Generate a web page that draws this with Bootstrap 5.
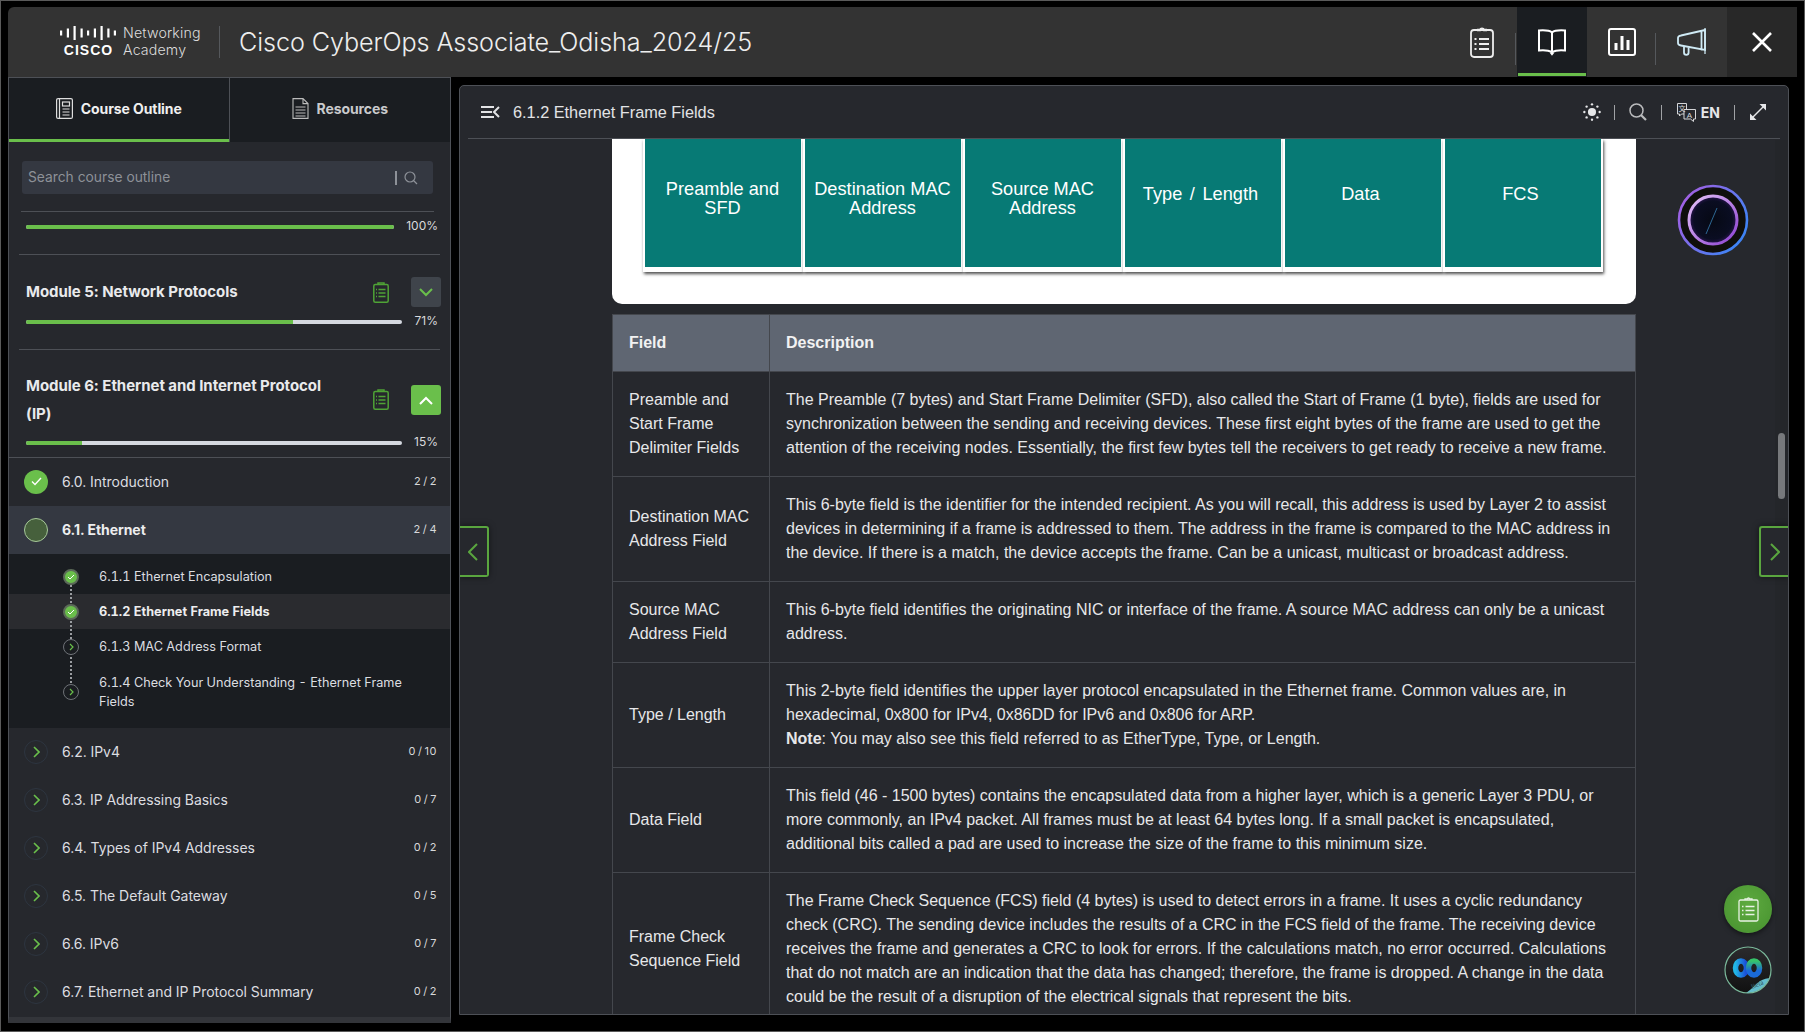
<!DOCTYPE html>
<html lang="en">
<head>
<meta charset="UTF-8">
<title>Cisco CyberOps Associate</title>
<link href="https://cdn.jsdelivr.net/npm/bootstrap@5.3.0/dist/css/bootstrap.min.css" rel="stylesheet">
<style>
html, body { margin: 0; height: 100%; background: #000; overflow: hidden; }
body { font-family: Inter, "Liberation Sans", sans-serif; color: #e6e7e9; }
.shell { width: 1805px; height: 1032px; border: 1px solid #5a5a5a; padding: 6px 7px 0; position: relative; }
/* top bar */
.topbar { height: 70px; background: #333; border-radius: 6px 6px 0 0; }
.logo-area { width: 211px; padding-left: 52px; height: 100%; gap: 7px; padding-bottom: 2px; }
.logo-cisco { width: 56px; color: #fff; }
.logo-cisco svg { display: block; }
.logo-word { font: 700 14px/12px "Liberation Sans", sans-serif; letter-spacing: 1px; text-align: center; margin-top: 4px; padding-left: 1px; }
.logo-na { font-size: 14.2px; line-height: 17px; font-weight: 300; color: #ddd; letter-spacing: .15px; }
.vsep { width: 1px; height: 32px; background: #55585c; }
.course-title { font-size: 25.2px; font-weight: 300; color: #eee; margin-left: 19px; margin-bottom: 0; letter-spacing: -.1px; }
.top-tab { width: 70px; height: 70px; position: relative; }
.top-tab.is-active { background: #1a1d21; }
.top-tab.is-active::after { content: ""; position: absolute; left: 1px; right: 1px; bottom: 1px; height: 3px; background: #6abf4b; }
.top-tab.is-close { background: #282828; }
.top-tab.with-sep::before { content: ""; position: absolute; right: 1px; top: 26px; height: 32px; width: 1px; background: #55585c; }
/* columns */
.work-row { height: 946px; }
.side-pane { width: 443px; height: 946px; background: #26282d; border: 1px solid #4d5056; border-bottom-width: 6px; border-bottom-color: #33353a; position: relative; }
.main-pane { width: 1330px; height: 930px; margin: 8px 0 0 8px; background: #26282d; border: 1px solid #4d5056; border-radius: 5px 5px 0 0; position: relative; overflow: hidden; }
/* sidebar */
.side-tab { width: 50%; height: 64px; background: #1a1d21; color: #c9cacc; font-size: 14px; font-weight: 700; gap: 8px; border: 0; border-radius: 0; letter-spacing: -.1px; padding-bottom: 9px; }
.side-tab.is-active { box-shadow: inset 0 -3px 0 #6abf4b; color: #f0f0f0; border-right: 1px solid #4d5056; }
.search-wrap { padding: 19px 17px 0 13px; }
.search-box { height: 33px; background: #343841; border-radius: 3px; padding: 0 15px 0 6px; }
.search-box input { background: transparent; border: 0; outline: 0; padding: 0; font-size: 13.8px; color: #ccc; box-shadow: none; }
.search-box input::placeholder { color: #8d9198; opacity: 1; }
.cursor-bar { width: 2px; height: 14px; background: #8d9198; margin-right: 7px; }
.side-line { height: 1px; background: #4d5056; }
.line-a { margin: 17px 16px 0 12px; }
.line-b { margin: 0 10px 0 10px; }
.line-c { margin: 0 10px 0 10px; }
.prog-row { gap: 12px; padding-left: 17px; padding-right: 12px; height: 16px; }
.prog-row .progress { flex: 1; height: 4px; background: #d5d8df; border-radius: 3px; }
.prog-row .progress-bar { background: #6abf4b; }
.prog-pct { font-size: 12px; color: #d9dadc; width: 24px; text-align: right; font-weight: 400; white-space: nowrap; margin-top: -3px; }
.top-prog { height: 42px; padding-top: 6px; padding-right: 12px; align-items: flex-start; }
.top-prog .progress { margin-top: 7px; }
.top-prog .prog-pct { margin-top: -1px; width: 32px; }
.mod-head { padding: 0 9px 0 17px; }
.mod-title { font-size: 15px; font-weight: 700; line-height: 28px; color: #e9eaec; flex: 1; letter-spacing: -.05px; margin: 0; }
.mod-six .mod-title { padding-right: 20px; }
.mod-clip { margin: 0 22px 0 16px; flex: none; }
.mod-six .mod-clip { margin-bottom: 2px; }
.mod-btn { width: 30px; height: 30px; border-radius: 3px; background: #3f444b; border: 0; padding: 0; flex: none; }
.mod-btn.is-open { background: #6abf4b; }
.mod-five { height: 94px; padding-top: 22px; }
.mod-six { height: 107px; padding-top: 22px; }
.mod-five .prog-row { margin-top: 7px; }
.mod-six .prog-row { margin-top: 7px; }
.topic-list { border-radius: 0; border-top: 1px solid #4d5056; }
.topic-row { height: 48px; background: transparent; border: 0; border-radius: 0 !important; padding: 0 13px 1px 15px; color: #dcdde0; font-size: 14px; font-weight: 400; gap: 14px; letter-spacing: -.05px; }
.topic-row.is-open { background: #343841; font-weight: 700; color: #ededee; }
.topic-count { margin-left: auto; font-size: 11px; letter-spacing: .5px; word-spacing: -1.500px; color: #d7d8da; }
.dot-big { width: 24px; height: 24px; border-radius: 50%; flex: none; }
.dot-done { background: #6abf4b; }
.dot-part { background: #46603c; border: 1px solid #a6c89a; }
.dot-todo { border: 1px solid #2d3540; }
.sub-list { background: #1a1d21; height: 174px; padding-top: 5px; position: relative; }
.sub-row { padding: 0 30px 0 54px; gap: 20px; font-size: 12.7px; color: #dcdde0; line-height: 19px; position: relative; font-variant-numeric: tabular-nums; }
.sub-row.is-current { background: #2a2b2f; font-weight: 700; color: #ededee; height: 35px; }
.sub-row.h-one { height: 35px; }
.sub-row.h-two { height: 55px; }
.dot-sub { width: 16px; height: 16px; border-radius: 50%; flex: none; position: relative; z-index: 2; background: #1a1d21; }
.dot-sub.ok { background: #6abf4b; border: 2px solid #5b6a58; }
.dot-sub.next { border: 1px solid #6e7277; }
.dot-trail { position: absolute; left: 61px; top: 20px; height: 117px; border-left: 2px dotted #9a9da1; z-index: 1; }
/* main */
.tool-bar { height: 53px; margin: 0 8px; border-bottom: 1px solid #4d5056; padding: 0 13px 0 13px; }
.page-name { font: 400 16.3px "Liberation Sans", sans-serif; color: #e2e3e5; margin: 0 0 0 13px; }
.tool-actions { gap: 14px; }
.tool-sun { margin-right: -1px; }
.tool-sep { width: 1px; height: 15px; background: #a0a2a5; }
.lang-code { font-size: 14px; font-weight: 700; color: #e6e7e9; }
.scroll-view { height: 876px; overflow: hidden; padding-left: 152px; position: relative; }
.scroll-track { position: absolute; right: 0; top: 54px; bottom: 0; width: 13px; background: #24262a; }
.scroll-thumb { position: absolute; right: 3px; top: 347px; width: 7px; height: 66px; background: #77797c; border-radius: 4px; }
.content-col { width: 1024px; }
.figure-card { background: #fff; height: 165px; border-radius: 0 0 10px 10px; padding: 0 33px 0 31px; }
.frame-cell { flex: 0 0 16.666%; height: 133px; background: #077a75; color: #fff; font: 400 18.2px/19px "Liberation Sans", sans-serif; text-align: center; border: solid #fff; border-width: 0 2px 5px 2px; box-shadow: 1px 2px 3px rgba(0,0,0,.7); padding: 0 0 17px 0; }
.frame-cell.two-line { padding-top: 8px; padding-right: 1px; }
.frame-cell.left-nudge { padding-right: 5px; }
.frame-cell.wide-word { word-spacing: 2.500px; }
.fields-table { margin: 10px 0 0; font: 400 16px/24px "Liberation Sans", sans-serif; --bs-table-bg: transparent; --bs-table-color: #e6e7e9; --bs-table-border-color: #44474d; border-color: #44474d; color: #e6e7e9; }
.fields-table th { background: #5f6672; color: #f2f2f2; font-weight: 700; padding: 16px; --bs-table-bg: #5f6672; --bs-table-color: #f2f2f2; }
.fields-table td { padding: 16px; vertical-align: middle; }
.fields-table .col-field { width: 157px; }
.page-arrow { position: absolute; top: 440px; width: 30px; height: 51px; border: 2px solid #5aa63f; background: #26282d; padding: 0; box-shadow: 0 0 6px rgba(0,0,0,.5); }
.arrow-prev { left: -1px; border-left: 0; border-radius: 0 3px 3px 0; }
.arrow-next { right: -1px; border-right: 0; border-radius: 3px 0 0 3px; }
.orb { position: absolute; left: 1217px; top: 98px; width: 72px; height: 72px; }
.fab-clip { position: absolute; left: 1264px; top: 799px; width: 48px; height: 48px; border-radius: 50%; background: radial-gradient(circle at 50% 40%, #5eaa40, #47922f); box-shadow: 0 2px 5px rgba(0,0,0,.5); }
.fab-webex { position: absolute; left: 1264px; top: 860px; width: 48px; height: 48px; }
</style>
</head>
<body>
<div class="shell">

  <header class="topbar d-flex align-items-center">
    <div class="logo-area d-flex align-items-center">
      <div class="logo-cisco">
        <svg width="56" height="14" viewBox="0 0 56 14" fill="#fff"><rect x="0" y="4.500" width="2.200" height="5"/><rect x="6.800" y="2.500" width="2.200" height="9"/><rect x="13.500" y="0" width="2.200" height="14"/><rect x="20.500" y="2.500" width="2.200" height="9"/><rect x="27" y="4.500" width="2.200" height="5"/><rect x="33.800" y="2.500" width="2.200" height="9"/><rect x="40.500" y="0" width="2.200" height="14"/><rect x="47.300" y="2.500" width="2.200" height="9"/><rect x="53.800" y="4.500" width="2.200" height="5"/></svg>
        <div class="logo-word">CISCO</div>
      </div>
      <div class="logo-na">Networking<br>Academy</div>
    </div>
    <div class="vsep"></div>
    <h1 class="course-title">Cisco CyberOps Associate_Odisha_2024/25</h1>
    <div class="ms-auto d-flex">
      <div class="top-tab with-sep d-flex align-items-center justify-content-center">
        <svg width="24" height="32" viewBox="0 0 24 32" fill="none" stroke="#eee" stroke-width="1.800"><rect x="1" y="4" width="22" height="27" rx="3"/><path d="M7 4h3a2.200 2.200 0 0 1 4 0h3" stroke-width="2.400"/><path d="M9 13h10M9 18h10M9 23h10" stroke-width="2"/><path d="M4.500 13h2M4.500 18h2M4.500 23h2" stroke-width="2"/></svg>
      </div>
      <div class="top-tab is-active d-flex align-items-center justify-content-center">
        <svg width="28" height="27" viewBox="0 0 28 27" fill="none" stroke="#fff" stroke-width="2"><path d="M14 3.500C12 1.800 8 1 1 1.500V21.500c6-.5 10 0 13 1.500 3-1.500 7-2 13-1.500V1.500C20 1 16 1.800 14 3.500zM14 3.500V23"/><path d="M12.500 23.500l1.500 2 1.500-2" stroke-width="1.500"/></svg>
      </div>
      <div class="top-tab with-sep d-flex align-items-center justify-content-center">
        <svg width="28" height="28" viewBox="0 0 28 28" fill="none" stroke="#fff" stroke-width="2"><rect x="1" y="1" width="26" height="26" rx="2"/><path d="M8 22v-7M14 22V8M20 22v-10" stroke-width="3"/></svg>
      </div>
      <div class="top-tab d-flex align-items-center justify-content-center">
        <svg width="30" height="30" viewBox="0 0 30 30" fill="none" stroke="#cfeaf5" stroke-width="1.800"><path d="M4 8.500L28 3v20L4 18.500Q1 18 1 16v-5q0-2 3-2.500zM24.500 3.500v20"/><path d="M28 1v26" stroke-width="1.300"/><path d="M7 19.500v6a2.300 2.300 0 0 0 4.600 0v-5"/></svg>
      </div>
      <div class="top-tab is-close d-flex align-items-center justify-content-center">
        <svg width="20" height="20" viewBox="0 0 20 20" stroke="#fff" stroke-width="2.600"><path d="M1 1l18 18M19 1L1 19"/></svg>
      </div>
    </div>
  </header>

  <div class="work-row d-flex">
    <aside class="side-pane">
      <div class="d-flex">
        <button class="side-tab is-active btn d-flex align-items-center justify-content-center">
          <svg width="17" height="21" viewBox="0 0 17 21" fill="none" stroke="#ddd" stroke-width="1.200"><rect x=".6" y=".6" width="15.800" height="19.800" rx="1.500"/><path d="M3.500 1v19"/><rect x="6.500" y="4" width="7" height="4" /><path d="M6.500 11h7M6.500 14h7M6.500 17h7"/></svg>
          Course Outline
        </button>
        <button class="side-tab btn d-flex align-items-center justify-content-center">
          <svg width="17" height="21" viewBox="0 0 17 21" fill="none" stroke="#bbb" stroke-width="1.100"><path d="M1 .6h10l5 5v14.800H1zM11 .6v5h5"/><path d="M3.500 9h10M3.500 12h10M3.500 15h10M3.500 18h10"/></svg>
          Resources
        </button>
      </div>

      <div class="search-wrap">
        <div class="search-box d-flex align-items-center">
          <input type="text" class="form-control" placeholder="Search course outline">
          <span class="cursor-bar flex-shrink-0"></span>
          <svg class="flex-shrink-0" width="14" height="14" viewBox="0 0 14 14" fill="none" stroke="#8d9198" stroke-width="1.200"><circle cx="6" cy="6" r="5"/><path d="M9.500 9.500L13 13"/></svg>
        </div>
      </div>

      <div class="side-line line-a"></div>
      <div class="prog-row top-prog d-flex">
        <div class="progress"><div class="progress-bar" style="width:100%"></div></div>
        <span class="prog-pct">100%</span>
      </div>
      <div class="side-line line-b"></div>

      <section class="mod-five">
        <div class="mod-head d-flex align-items-center">
          <h2 class="mod-title">Module 5: Network Protocols</h2>
          <svg class="mod-clip" width="16" height="21" viewBox="0 0 16 21" fill="none" stroke="#4fa336" stroke-width="1.500"><rect x=".8" y="2.500" width="14.400" height="17.700" rx="1.500"/><path d="M5 2.500V1h6v1.500" /><path d="M5.500 7.500h7M5.500 11h7M5.500 14.500h7M3 7.500h1M3 11h1M3 14.500h1"/></svg>
          <button class="mod-btn d-flex align-items-center justify-content-center"><svg width="14" height="9" viewBox="0 0 14 9" fill="none" stroke="#6abf4b" stroke-width="2"><path d="M1 1l6 6 6-6"/></svg></button>
        </div>
        <div class="prog-row d-flex align-items-center">
          <div class="progress"><div class="progress-bar" style="width:71%"></div></div>
          <span class="prog-pct">71%</span>
        </div>
      </section>
      <div class="side-line line-c"></div>

      <section class="mod-six">
        <div class="mod-head d-flex align-items-center">
          <h2 class="mod-title">Module 6: Ethernet and Internet Protocol (IP)</h2>
          <svg class="mod-clip" width="16" height="21" viewBox="0 0 16 21" fill="none" stroke="#4fa336" stroke-width="1.500"><rect x=".8" y="2.500" width="14.400" height="17.700" rx="1.500"/><path d="M5 2.500V1h6v1.500" /><path d="M5.500 7.500h7M5.500 11h7M5.500 14.500h7M3 7.500h1M3 11h1M3 14.500h1"/></svg>
          <button class="mod-btn is-open d-flex align-items-center justify-content-center"><svg width="14" height="9" viewBox="0 0 14 9" fill="none" stroke="#fff" stroke-width="2"><path d="M1 8l6-6 6 6"/></svg></button>
        </div>
        <div class="prog-row d-flex align-items-center">
          <div class="progress"><div class="progress-bar" style="width:15%"></div></div>
          <span class="prog-pct">15%</span>
        </div>
      </section>

      <div class="list-group topic-list">
        <div class="list-group-item topic-row d-flex align-items-center">
          <span class="dot-big dot-done d-flex align-items-center justify-content-center"><svg width="11" height="9" viewBox="0 0 11 9" fill="none" stroke="#fff" stroke-width="1.400"><path d="M1 4.500l3 3 6-6.500"/></svg></span>
          6.0. Introduction <span class="topic-count">2 / 2</span>
        </div>
        <div class="list-group-item topic-row is-open d-flex align-items-center">
          <span class="dot-big dot-part"></span>
          6.1. Ethernet <span class="topic-count fw-normal">2 / 4</span>
        </div>
        <div class="sub-list">
          <span class="dot-trail"></span>
          <div class="sub-row h-one d-flex align-items-center">
            <span class="dot-sub ok d-flex align-items-center justify-content-center"><svg width="8" height="6" viewBox="0 0 8 6" fill="none" stroke="#fff" stroke-width="1"><path d="M1 3l2 2 4-4"/></svg></span>
            6.1.1 Ethernet Encapsulation
          </div>
          <div class="sub-row is-current d-flex align-items-center">
            <span class="dot-sub ok d-flex align-items-center justify-content-center"><svg width="8" height="6" viewBox="0 0 8 6" fill="none" stroke="#fff" stroke-width="1"><path d="M1 3l2 2 4-4"/></svg></span>
            6.1.2 Ethernet Frame Fields
          </div>
          <div class="sub-row h-one d-flex align-items-center">
            <span class="dot-sub next d-flex align-items-center justify-content-center"><svg width="5" height="8" viewBox="0 0 5 8" fill="none" stroke="#6abf4b" stroke-width="1.200"><path d="M1 1l3 3-3 3"/></svg></span>
            6.1.3 MAC Address Format
          </div>
          <div class="sub-row h-two d-flex align-items-center">
            <span class="dot-sub next d-flex align-items-center justify-content-center"><svg width="5" height="8" viewBox="0 0 5 8" fill="none" stroke="#6abf4b" stroke-width="1.200"><path d="M1 1l3 3-3 3"/></svg></span>
            <span>6.1.4 Check Your Understanding - Ethernet Frame Fields</span>
          </div>
        </div>
        <div class="list-group-item topic-row d-flex align-items-center"><span class="dot-big dot-todo d-flex align-items-center justify-content-center"><svg width="7" height="12" viewBox="0 0 7 12" fill="none" stroke="#6abf4b" stroke-width="1.600"><path d="M1 1l5 5-5 5"/></svg></span>6.2. IPv4 <span class="topic-count">0 / 10</span></div>
        <div class="list-group-item topic-row d-flex align-items-center"><span class="dot-big dot-todo d-flex align-items-center justify-content-center"><svg width="7" height="12" viewBox="0 0 7 12" fill="none" stroke="#6abf4b" stroke-width="1.600"><path d="M1 1l5 5-5 5"/></svg></span>6.3. IP Addressing Basics <span class="topic-count">0 / 7</span></div>
        <div class="list-group-item topic-row d-flex align-items-center"><span class="dot-big dot-todo d-flex align-items-center justify-content-center"><svg width="7" height="12" viewBox="0 0 7 12" fill="none" stroke="#6abf4b" stroke-width="1.600"><path d="M1 1l5 5-5 5"/></svg></span>6.4. Types of IPv4 Addresses <span class="topic-count">0 / 2</span></div>
        <div class="list-group-item topic-row d-flex align-items-center"><span class="dot-big dot-todo d-flex align-items-center justify-content-center"><svg width="7" height="12" viewBox="0 0 7 12" fill="none" stroke="#6abf4b" stroke-width="1.600"><path d="M1 1l5 5-5 5"/></svg></span>6.5. The Default Gateway <span class="topic-count">0 / 5</span></div>
        <div class="list-group-item topic-row d-flex align-items-center"><span class="dot-big dot-todo d-flex align-items-center justify-content-center"><svg width="7" height="12" viewBox="0 0 7 12" fill="none" stroke="#6abf4b" stroke-width="1.600"><path d="M1 1l5 5-5 5"/></svg></span>6.6. IPv6 <span class="topic-count">0 / 7</span></div>
        <div class="list-group-item topic-row d-flex align-items-center"><span class="dot-big dot-todo d-flex align-items-center justify-content-center"><svg width="7" height="12" viewBox="0 0 7 12" fill="none" stroke="#6abf4b" stroke-width="1.600"><path d="M1 1l5 5-5 5"/></svg></span>6.7. Ethernet and IP Protocol Summary <span class="topic-count">0 / 2</span></div>
      </div>
    </aside>

    <main class="main-pane">
      <div class="tool-bar d-flex align-items-center">
        <svg width="19" height="12" viewBox="0 0 19 12" fill="none" stroke="#e2e3e5" stroke-width="2"><path d="M0 1h13M0 6h11M0 11h13M18 1l-5 5 5 5"/></svg>
        <h2 class="page-name">6.1.2 Ethernet Frame Fields</h2>
        <div class="tool-actions ms-auto d-flex align-items-center">
          <svg class="tool-sun" width="18" height="18" viewBox="0 0 20 20" fill="#e6e7e9"><circle cx="10" cy="10" r="4.500"/><circle cx="10" cy="1.500" r="1.300"/><circle cx="10" cy="18.500" r="1.300"/><circle cx="1.500" cy="10" r="1.300"/><circle cx="18.500" cy="10" r="1.300"/><circle cx="4" cy="4" r="1.300"/><circle cx="16" cy="4" r="1.300"/><circle cx="4" cy="16" r="1.300"/><circle cx="16" cy="16" r="1.300"/></svg>
          <span class="tool-sep"></span>
          <svg width="18" height="18" viewBox="0 0 18 18" fill="none" stroke="#b9babc" stroke-width="1.500"><circle cx="7.500" cy="7.500" r="6.500"/><path d="M12 12l5 5" stroke-width="2.200"/></svg>
          <span class="tool-sep"></span>
          <span class="d-flex align-items-center gap-1">
            <svg width="21" height="19" viewBox="0 0 21 19" fill="none" stroke="#d5d6d8" stroke-width="1"><path d="M1.500 .5h9v10.500H5.500l-2 2v-2h-2z"/><path d="M8 6.500h11.500v9.500h-2v2.500l-3-2.500H8z" fill="#26282d"/><text x="2.500" y="8" font-size="7" fill="#d5d6d8" stroke="none" font-family="Noto Sans CJK SC, sans-serif">文</text><text x="10.800" y="14.500" font-size="8" fill="#d5d6d8" stroke="none" font-family="Liberation Sans, sans-serif">A</text></svg>
            <span class="lang-code">EN</span>
          </span>
          <span class="tool-sep"></span>
          <svg width="18" height="18" viewBox="0 0 18 18" fill="none" stroke="#e6e7e9" stroke-width="1.500"><path d="M3 15L15 3"/><path d="M10.500 1H17V7.500z" fill="#e6e7e9" stroke="none"/><path d="M1 10.500V17H7.500z" fill="#e6e7e9" stroke="none"/></svg>
        </div>
      </div>

      <div class="scroll-view">
        <div class="content-col">
          <div class="figure-card">
            <div class="d-flex">
              <div class="frame-cell two-line d-flex align-items-center justify-content-center">Preamble and<br>SFD</div>
              <div class="frame-cell two-line d-flex align-items-center justify-content-center">Destination MAC<br>Address</div>
              <div class="frame-cell two-line d-flex align-items-center justify-content-center">Source MAC<br>Address</div>
              <div class="frame-cell wide-word left-nudge d-flex align-items-center justify-content-center">Type / Length</div>
              <div class="frame-cell left-nudge d-flex align-items-center justify-content-center">Data</div>
              <div class="frame-cell left-nudge d-flex align-items-center justify-content-center">FCS</div>
            </div>
          </div>
          <table class="table table-bordered fields-table">
            <thead>
              <tr><th class="col-field">Field</th><th>Description</th></tr>
            </thead>
            <tbody>
              <tr><td>Preamble and Start Frame Delimiter Fields</td><td>The Preamble (7 bytes) and Start Frame Delimiter (SFD), also called the Start of Frame (1 byte), fields are used for synchronization between the sending and receiving devices. These first eight bytes of the frame are used to get the attention of the receiving nodes. Essentially, the first few bytes tell the receivers to get ready to receive a new frame.</td></tr>
              <tr><td>Destination MAC Address Field</td><td>This 6-byte field is the identifier for the intended recipient. As you will recall, this address is used by Layer 2 to assist devices in determining if a frame is addressed to them. The address in the frame is compared to the MAC address in the device. If there is a match, the device accepts the frame. Can be a unicast, multicast or broadcast address.</td></tr>
              <tr><td>Source MAC Address Field</td><td>This 6-byte field identifies the originating NIC or interface of the frame. A source MAC address can only be a unicast address.</td></tr>
              <tr><td>Type / Length</td><td>This 2-byte field identifies the upper layer protocol encapsulated in the Ethernet frame. Common values are, in hexadecimal, 0x800 for IPv4, 0x86DD for IPv6 and 0x806 for ARP.<br><strong>Note</strong>: You may also see this field referred to as EtherType, Type, or Length.</td></tr>
              <tr><td>Data Field</td><td>This field (46 - 1500 bytes) contains the encapsulated data from a higher layer, which is a generic Layer 3 PDU, or more commonly, an IPv4 packet. All frames must be at least 64 bytes long. If a small packet is encapsulated, additional bits called a pad are used to increase the size of the frame to this minimum size.</td></tr>
              <tr><td>Frame Check Sequence Field</td><td>The Frame Check Sequence (FCS) field (4 bytes) is used to detect errors in a frame. It uses a cyclic redundancy check (CRC). The sending device includes the results of a CRC in the FCS field of the frame. The receiving device receives the frame and generates a CRC to look for errors. If the calculations match, no error occurred. Calculations that do not match are an indication that the data has changed; therefore, the frame is dropped. A change in the data could be the result of a disruption of the electrical signals that represent the bits.</td></tr>
            </tbody>
          </table>
        </div>
      </div>

      <div class="scroll-track"></div>
      <div class="scroll-thumb"></div>

      <button class="page-arrow arrow-prev d-flex align-items-center justify-content-center"><svg width="10" height="18" viewBox="0 0 10 18" fill="none" stroke="#5aa63f" stroke-width="2"><path d="M9 1L1 9l8 8"/></svg></button>
      <button class="page-arrow arrow-next d-flex align-items-center justify-content-center"><svg width="10" height="18" viewBox="0 0 10 18" fill="none" stroke="#5aa63f" stroke-width="2"><path d="M1 1l8 8-8 8"/></svg></button>

      <svg class="orb" viewBox="0 0 72 72">
        <defs>
          <linearGradient id="ringA" x1="0" y1="0" x2="1" y2="0.600"><stop offset="0" stop-color="#b05be0"/><stop offset="1" stop-color="#3f83f4"/></linearGradient>
          <linearGradient id="ringB" x1="0" y1="0" x2="1" y2="1"><stop offset="0" stop-color="#e6c4f8"/><stop offset="1" stop-color="#8a3fd0"/></linearGradient>
          <radialGradient id="orbCore"><stop offset="0" stop-color="#060914"/><stop offset=".8" stop-color="#0a0d22"/><stop offset="1" stop-color="#2a1550"/></radialGradient>
        </defs>
        <circle cx="36" cy="36" r="34" fill="#0f0f0c" stroke="url(#ringA)" stroke-width="2.600"/>
        <circle cx="36" cy="36" r="24" fill="url(#orbCore)" stroke="url(#ringB)" stroke-width="3"/>
        <path d="M29 50L40 24" stroke="#3d8fc9" stroke-width=".7"/>
      </svg>

      <button class="fab-clip btn d-flex align-items-center justify-content-center p-0">
        <svg width="21" height="25" viewBox="0 0 21 25" fill="none" stroke="#e8f2e4" stroke-width="1.300"><rect x="1" y="3" width="19" height="21" rx="1.500"/><path d="M7 3V2h2.500a1 1 0 0 1 2 0H14v1"/><path d="M7.500 9.500h9M7.500 13.500h9M7.500 17.500h9M4 9.500h1.500M4 13.500h1.500M4 17.500h1.500"/></svg>
      </button>
      <svg class="fab-webex" viewBox="0 0 48 48">
        <defs>
          <clipPath id="webexClip"><circle cx="24" cy="24" r="23"/></clipPath>
          <linearGradient id="webexBody" x1="0" y1="0" x2="0" y2="1"><stop offset="0" stop-color="#2b2b2d"/><stop offset="1" stop-color="#111"/></linearGradient>
          <linearGradient id="loopL" x1="0" y1="0" x2="1" y2="0"><stop offset="0" stop-color="#22b6e6"/><stop offset="1" stop-color="#1a49d6"/></linearGradient>
          <linearGradient id="loopR" x1="0" y1="0" x2="0" y2="1"><stop offset="0" stop-color="#36c46a"/><stop offset=".7" stop-color="#1a6ad8"/></linearGradient>
        </defs>
        <circle cx="24" cy="24" r="23" fill="url(#webexBody)"/>
        <path d="M20 48C28 44 30 39 36 35c4-2 8-3 12-3v16z" fill="#63bccb" clip-path="url(#webexClip)"/>
        <ellipse cx="17" cy="22" rx="5.500" ry="7" fill="none" stroke="url(#loopL)" stroke-width="5.500"/>
        <ellipse cx="30" cy="22" rx="5.500" ry="7" fill="none" stroke="url(#loopR)" stroke-width="5.500"/>
        <circle cx="24" cy="24" r="23" fill="none" stroke="#7ab89a" stroke-width="1.200"/>
        <text x="28" y="43" font-size="7" fill="#31545e" font-family="Liberation Serif, serif" transform="rotate(-22 28 43)">Beta</text>
      </svg>
    </main>
  </div>
</div>
<script src="https://cdn.jsdelivr.net/npm/bootstrap@5.3.0/dist/js/bootstrap.bundle.min.js"></script>
</body>
</html>
